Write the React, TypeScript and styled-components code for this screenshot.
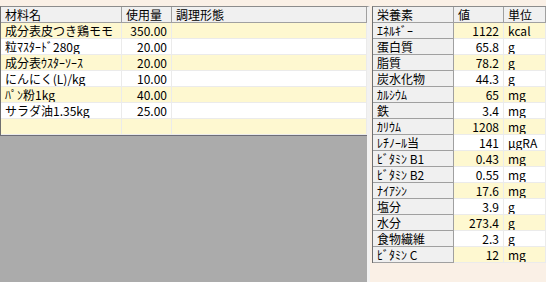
import React from 'react';
import styled, { createGlobalStyle } from 'styled-components';

const GlobalStyle = createGlobalStyle`
  html, body {
    margin: 0;
    padding: 0;
    background: #faf0e6;
    overflow: hidden;
  }
  body {
    font-family: "MS UI Gothic", "Noto Sans CJK JP", sans-serif;
    font-size: 12px;
    color: #000;
  }
`;

const Screen = styled.div`
  width: 546px;
  height: 282px;
  display: flex;
  align-items: flex-start;
  padding-top: 6px;
  box-sizing: border-box;
  column-gap: 2px;
`;

const LeftGrid = styled.div`
  width: 370px;
  height: 276px;
  display: flex;
  flex-direction: column;
  box-sizing: border-box;
  border-left: 1px solid #6f6f6f;
  border-top: 1px solid #8c8c8c;
  border-right: 3px solid #f2f2f2;
`;

const RightGrid = styled.div`
  flex: 1;
  display: flex;
  flex-direction: column;
  box-sizing: border-box;
  border-left: 1px solid #6f6f6f;
  border-top: 1px solid #8c8c8c;
`;

const Row = styled.div`
  display: flex;
  height: 16px;
  flex-shrink: 0;
`;

const Cell = styled.div<{ $w?: number; $align?: 'left' | 'right'; $stripe?: boolean }>`
  ${(p) => (p.$w ? `width: ${p.$w}px;` : 'flex: 1;')}
  flex-shrink: 0;
  height: 16px;
  box-sizing: border-box;
  line-height: 15px;
  white-space: pre;
  overflow: hidden;
  text-align: ${(p) => p.$align || 'left'};
  padding: ${(p) => (p.$align === 'right' ? '0 4px 0 0' : '0 0 0 4px')};
  background: ${(p) => (p.$stripe ? '#fef8d0' : '#ffffff')};
  border-right: 1px solid #ebebeb;
  border-bottom: 1px solid #ebebeb;
`;

const HeadCell = styled(Cell)`
  background: #f0f0f0;
  border-right: 1px solid #a0a0a0;
  border-bottom: 1px solid #a0a0a0;
`;

const NameCell = styled(Cell)`
  background: #f0f0f0;
  border-right: 1px solid #a0a0a0;
  border-bottom: 1px solid #a0a0a0;
`;

const EmptyArea = styled.div`
  flex: 1;
  background: #ababab;
  border-top: 1px solid #6e6e78;
  margin-left: -1px;
`;

const ingredients = [
  { name: '成分表皮つき鶏モモ', qty: '350.00' },
  { name: '粒ﾏｽﾀｰﾄﾞ280g', qty: '20.00' },
  { name: '成分表ｳｽﾀｰｿｰｽ', qty: '20.00' },
  { name: 'にんにく(L)/kg', qty: '10.00' },
  { name: 'ﾊﾟﾝ粉1kg', qty: '40.00' },
  { name: 'サラダ油1.35kg', qty: '25.00' },
  { name: '', qty: '' },
];

const nutrients = [
  ['ｴﾈﾙｷﾞｰ', '1122', 'kcal'],
  ['蛋白質', '65.8', 'g'],
  ['脂質', '78.2', 'g'],
  ['炭水化物', '44.3', 'g'],
  ['ｶﾙｼｳﾑ', '65', 'mg'],
  ['鉄', '3.4', 'mg'],
  ['ｶﾘｳﾑ', '1208', 'mg'],
  ['ﾚﾁﾉｰﾙ当', '141', 'μgRA'],
  ['ﾋﾞﾀﾐﾝ B1', '0.43', 'mg'],
  ['ﾋﾞﾀﾐﾝ B2', '0.55', 'mg'],
  ['ﾅｲｱｼﾝ', '17.6', 'mg'],
  ['塩分', '3.9', 'g'],
  ['水分', '273.4', 'g'],
  ['食物繊維', '2.3', 'g'],
  ['ﾋﾞﾀﾐﾝ C', '12', 'mg'],
];

const App: React.FC = () => {
  return (
    <>
      <GlobalStyle />
      <Screen>
        <LeftGrid>
          <Row>
            <HeadCell $w={121}>材料名</HeadCell>
            <HeadCell $w={50}>使用量</HeadCell>
            <HeadCell>調理形態</HeadCell>
          </Row>
          {ingredients.map((item, i) => (
            <Row key={i}>
              <Cell $w={121} $stripe={i % 2 === 0}>{item.name}</Cell>
              <Cell $w={50} $align="right" $stripe={i % 2 === 0}>{item.qty}</Cell>
              <Cell $stripe={i % 2 === 0} />
            </Row>
          ))}
          <EmptyArea />
        </LeftGrid>
        <RightGrid>
          <Row>
            <HeadCell $w={81}>栄養素</HeadCell>
            <HeadCell $w={50}>値</HeadCell>
            <HeadCell>単位</HeadCell>
          </Row>
          {nutrients.map(([name, value, unit], i) => (
            <Row key={name}>
              <NameCell $w={81}>{name}</NameCell>
              <Cell $w={50} $align="right" $stripe={i % 2 === 0}>{value}</Cell>
              <Cell $stripe={i % 2 === 0}>{unit}</Cell>
            </Row>
          ))}
        </RightGrid>
      </Screen>
    </>
  );
};

export default App;
